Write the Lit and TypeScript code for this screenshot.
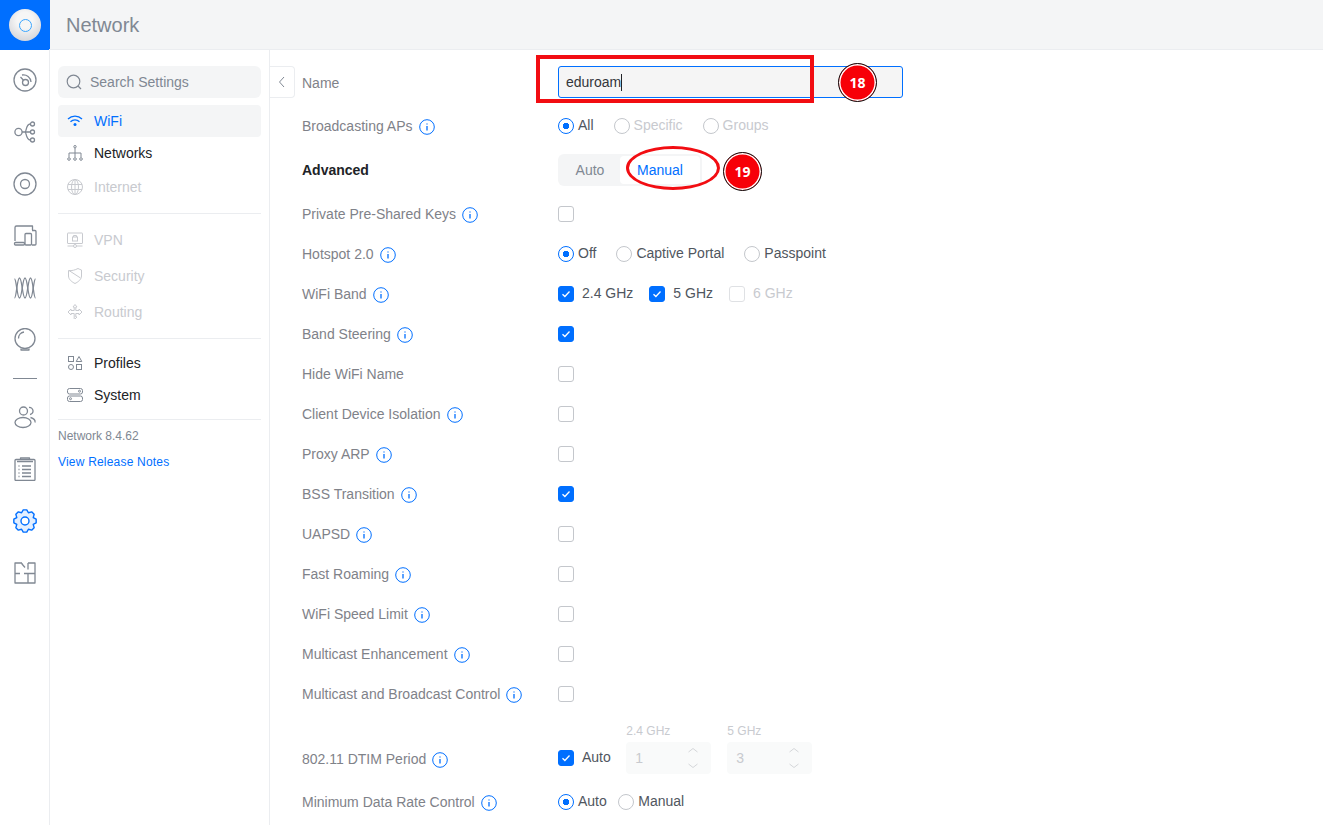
import { LitElement, html, css, svg } from 'lit';
import { customElement } from 'lit/decorators.js';

const gear = () => {
  // eight toothed gear, computed so the teeth stay even
  let d = '';
  const teeth = 8;
  for (let i = 0; i < teeth; i++) {
    const a = (i * Math.PI * 2) / teeth - Math.PI / 2;
    const step = (Math.PI * 2) / teeth;
    const pts: [number, number][] = [
      [8.9, a - step * 0.5],
      [11.3, a - step * 0.2],
      [11.3, a + step * 0.2],
    ];
    for (const [r, t] of pts) {
      d += `${d ? 'L' : 'M'}${(12 + r * Math.cos(t)).toFixed(2)} ${(12 + r * Math.sin(t)).toFixed(2)}`;
    }
  }
  return d + 'Z';
};

const railIcons = [
  svg`<circle cx="12" cy="12" r="11"/><circle cx="12.500" cy="14.500" r="3"/><path d="M7.500 9l3 3.200M9 7a7.500 7.500 0 0 1 9 7"/>`,
  svg`<circle cx="5.500" cy="12" r="3.600"/><path d="M9 12h8M12 12c1.500 0 .8-8 5.200-8M12 12c1.500 0 .8 8 5.200 8"/><circle cx="19.500" cy="4" r="2"/><circle cx="19.500" cy="12" r="2"/><circle cx="19.500" cy="20" r="2"/>`,
  svg`<circle cx="12" cy="12" r="11"/><circle cx="12" cy="12" r="4.500"/>`,
  svg`<path d="M2 17V3.500A1.500 1.500 0 0 1 3.500 2H19.500v4"/><rect x="1.500" y="18.500" width="10" height="2.500" rx="1"/><rect x="12" y="9.500" width="6.500" height="11.500" rx="1"/><path d="M19 6.500h3a1 1 0 0 1 1 1V20a1 1 0 0 1-1 1h-3"/>`,
  svg`<path d="M1.500 3C3.500 3 4 22 6.500 22S9.500 2 12 2s3 20 5.500 20 3-19 5-19"/><path d="M1.500 22C3.500 22 4 2 6.500 2S9.500 22 12 22s3-20 5.500-20 3 20 5 20"/>`,
  svg`<circle cx="12" cy="10.500" r="10"/><path d="M5.500 10.500A6.500 6.500 0 0 1 11 4M8 20.500v1.500h8v-1.500"/>`,
  svg`<circle cx="10.500" cy="6" r="4"/><ellipse cx="10" cy="17.500" rx="8" ry="5"/><path d="M16 2.500a3.500 3.500 0 0 1 1 7M17.500 12.500c3 .8 5 2.500 4.500 5"/>`,
  svg`<rect x="2" y="2.500" width="20" height="21" rx="1"/><path d="M7.500 2.500V1h9v1.500M4 4.500h16"/><path d="M9 9h9M9 12.500h9M9 16h9M9 19.500h9M5.500 9h1M5.500 12.500h1M5.500 16h1M5.500 19.500h1"/>`,
  svg`<path class="gear" d="${gear()}"/><circle class="gear-hole" cx="12" cy="12" r="4"/>`,
  svg`<path d="M9 2H2v20h20V2h-7M9 2v1l3 3.500M15 2v6.500M2 12.500h5M11 12.500h11M15 12.500V22"/>`,
];
const railSep = 6;

const navIcons: Record<string, unknown> = {
  wifi: svg`<path d="M2 7a10 10 0 0 1 14 0M4.500 9.700a6.500 6.500 0 0 1 9 0"/><circle class="solid" cx="9" cy="12.500" r="1.500"/>`,
  networks: svg`<rect x="7.800" y="1.500" width="2.400" height="2.400" rx="1.200"/><path d="M9 4v9M3 13V9h12v4"/><circle cx="3" cy="15" r="1.300"/><circle cx="9" cy="15" r="1.300"/><circle cx="15" cy="15" r="1.300"/>`,
  internet: svg`<circle cx="9" cy="9" r="7.500"/><ellipse cx="9" cy="9" rx="3.500" ry="7.500"/><path d="M9 1.500v15M2 6.500h14M2 11.500h14"/>`,
  vpn: svg`<rect x="1.500" y="2" width="15" height="10.500" rx=".5"/><rect x="6.500" y="6" width="5" height="4"/><path d="M7.500 6V4.500h3V6M1.500 15h6M10.500 15h6"/><circle cx="9" cy="15" r="1.500"/>`,
  security: svg`<path d="M2.500 3.500C6 4 9 3 12 1.500c1 .6 2.500 1.200 3.500 1.500V9c0 3.500-3.500 6-6.500 7.500C6 15 2.500 12.500 2.500 9zM3 3.500L14.500 11"/>`,
  routing: svg`<path d="M9 1.500l-2 2.500h1.200v3.500H5V6L2 9l3 3v-1.500h3.200V16M9.800 4H11L9 1.500M9.800 4v3.500H13V6l3 3-3 3v-1.500H9.800V14H11l-2 2"/>`,
  profiles: svg`<rect x="2.500" y="2.500" width="5" height="5"/><path d="M13 2.500l2.800 5h-5.600z"/><circle cx="5" cy="13" r="2.500"/><rect x="10.500" y="10.500" width="5" height="5"/>`,
  system: svg`<rect x="1.500" y="2.500" width="15" height="5.500" rx="2"/><rect x="1.500" y="10" width="15" height="5.500" rx="2"/><circle cx="13.500" cy="5.200" r="1"/><circle cx="4.500" cy="12.700" r="1"/>`,
};

type Row = { label: string; info?: boolean; checked?: boolean };
const checkRows: Row[] = [
  { label: 'Band Steering', info: true, checked: true },
  { label: 'Hide WiFi Name' },
  { label: 'Client Device Isolation', info: true },
  { label: 'Proxy ARP', info: true },
  { label: 'BSS Transition', info: true, checked: true },
  { label: 'UAPSD', info: true },
  { label: 'Fast Roaming', info: true },
  { label: 'WiFi Speed Limit', info: true },
  { label: 'Multicast Enhancement', info: true },
  { label: 'Multicast and Broadcast Control', info: true },
];

@customElement('app-root')
export class AppRoot extends LitElement {
  static styles = css`
    :host {
      display: block;
      height: 825px;
      overflow: hidden;
      background: #fff;
      font-family: 'Liberation Sans', Arial, sans-serif;
      font-size: 14px;
      color: #50565e;
    }
    svg {
      display: block;
      fill: none;
    }
    .header {
      display: flex;
      align-items: center;
      height: 50px;
      background: #f4f5f6;
    }
    .logo {
      display: flex;
      align-items: center;
      justify-content: center;
      width: 50px;
      height: 50px;
      background: #006fff;
    }
    .logo-disc {
      display: flex;
      align-items: center;
      justify-content: center;
      width: 32px;
      height: 32px;
      border-radius: 50%;
      background: radial-gradient(circle at 50% 35%, #f6f6f6 30%, #c9cacf 100%);
    }
    .logo-ring {
      width: 11px;
      height: 11px;
      border: 1.500px solid #3aa5ff;
      border-radius: 50%;
    }
    .title {
      margin-left: 16px;
      font-size: 20px;
      color: #808893;
    }
    .body {
      display: flex;
      height: 776px;
      margin-top: -1px;
    }
    .rail {
      width: 49px;
      flex: none;
      padding-top: 5px;
      border-right: 1px solid #ebedf0;
    }
    .rail-item {
      display: flex;
      align-items: center;
      justify-content: center;
      height: 52px;
      width: 50px;
    }
    .rail-item svg {
      stroke: #808893;
      stroke-width: 1.300;
      stroke-linejoin: round;
    }
    .rail-item .gear {
      fill: #e3efff;
      stroke: #006fff;
      stroke-width: 1.400;
    }
    .rail-item .gear-hole {
      fill: #fff;
      stroke: #006fff;
      stroke-width: 1.400;
    }
    .rail-sep {
      display: flex;
      align-items: center;
      height: 25px;
      padding-left: 13px;
    }
    .rail-sep i {
      display: block;
      width: 24px;
      height: 1px;
      background: #808893;
    }
    .side {
      width: 203px;
      flex: none;
      padding: 16px 8px 0;
      border-right: 1px solid #ebedf0;
      border-top: 1px solid #ebedf0;
    }
    .search {
      display: flex;
      align-items: center;
      gap: 8px;
      height: 32px;
      padding-left: 8px;
      border-radius: 6px;
      background: #f4f5f6;
      color: #808893;
    }
    .search svg {
      stroke: #808893;
      stroke-width: 1.200;
    }
    .nav {
      display: flex;
      align-items: center;
      gap: 10px;
      height: 32px;
      padding-left: 8px;
      border-radius: 4px;
      color: #212327;
    }
    .nav svg {
      stroke: #808893;
      stroke-width: 1;
    }
    .nav.active {
      margin-top: 7px;
      background: #f4f5f6;
      color: #006fff;
    }
    .nav.active svg {
      stroke: #006fff;
      stroke-width: 1.300;
    }
    .nav .solid {
      fill: #006fff;
      stroke: none;
    }
    .nav.off {
      height: 36px;
      color: #c8cacf;
    }
    .nav.off svg {
      stroke: #c8cacf;
    }
    .divider {
      height: 1px;
      margin: 8px 0;
      background: #ebedf0;
    }
    .version {
      font-size: 12px;
      line-height: 16px;
      color: #808893;
    }
    .notes {
      margin-top: 10px;
      font-size: 12px;
      line-height: 16px;
      letter-spacing: 0.2px;
      color: #006fff;
    }
    .main {
      position: relative;
      flex: 1;
      padding: 16px 0 0 32px;
      border-top: 1px solid #ebedf0;
    }
    .collapse {
      position: absolute;
      left: 0;
      top: 16px;
      display: flex;
      align-items: center;
      justify-content: center;
      box-sizing: border-box;
      width: 25px;
      height: 32px;
      border: 1px solid #ebedf0;
      border-left: none;
      border-radius: 0 4px 4px 0;
      background: #fff;
    }
    .collapse svg {
      stroke: #808893;
      stroke-width: 1;
    }
    .row {
      display: flex;
      align-items: center;
      height: 40px;
    }
    .row.first {
      height: 34px;
      margin-bottom: 6px;
    }
    .row.adv {
      margin: 4px 0;
    }
    .row.tall {
      align-items: flex-end;
      height: 65px;
    }
    .row.last {
      margin-top: 3px;
    }
    .label {
      display: flex;
      align-items: center;
      gap: 6px;
      width: 256px;
      flex: none;
      color: #7f8289;
    }
    .row.tall .label {
      height: 40px;
    }
    .label.bold {
      font-weight: 700;
      color: #212327;
    }
    .info {
      margin-top: 2px;
      stroke: #006fff;
      stroke-width: 1;
    }
    .group {
      display: flex;
      align-items: center;
    }
    .name-input {
      display: flex;
      align-items: center;
      box-sizing: border-box;
      width: 345px;
      height: 32px;
      margin-top: -2px;
      padding-left: 7px;
      border: 1px solid #006fff;
      border-radius: 3px;
      background: #f5f5f5;
      color: #33363b;
    }
    .caret {
      width: 1px;
      height: 17px;
      background: #212327;
    }
    .lift {
      margin-bottom: 2px;
    }
    .radio {
      display: flex;
      align-items: center;
      margin-right: 20px;
    }
    .radio.tight {
      margin-right: 11.500px;
    }
    .radio i {
      display: block;
      box-sizing: border-box;
      width: 16px;
      height: 16px;
      margin-right: 4px;
      border: 1px solid #c4c7cc;
      border-radius: 50%;
    }
    .radio.on i {
      border-color: #006fff;
      background: radial-gradient(circle, #006fff 0 3px, #fff 3.500px);
    }
    .radio.dim {
      color: #c8cacf;
    }
    .box {
      display: flex;
      align-items: center;
      justify-content: center;
      box-sizing: border-box;
      width: 16px;
      height: 16px;
      border: 1px solid #c4c7cc;
      border-radius: 3px;
      background: #fff;
    }
    .box.on {
      border-color: #006fff;
      background: #006fff;
    }
    .box.dim {
      border-color: #dfe1e4;
    }
    .box svg {
      stroke: #fff;
      stroke-width: 1.300;
    }
    .check {
      display: flex;
      align-items: center;
      gap: 8px;
      margin-right: 16px;
    }
    .check.dim {
      color: #c8cacf;
    }
    .seg {
      display: flex;
      box-sizing: border-box;
      width: 144px;
      height: 32px;
      padding: 2px;
      border-radius: 6px;
      background: #f4f5f6;
    }
    .seg span {
      display: flex;
      align-items: center;
      justify-content: center;
      height: 28px;
      color: #808893;
    }
    .seg .auto {
      width: 60px;
    }
    .seg .manual {
      width: 80px;
      border-radius: 4px;
      background: #fff;
      color: #006fff;
    }
    .tall-group {
      align-items: flex-end;
      padding-bottom: 5px;
    }
    .tall-group .check {
      height: 32px;
      margin-right: 15.500px;
    }
    .field {
      margin-right: 16px;
      width: 85px;
    }
    .field small {
      display: block;
      margin-bottom: 4px;
      font-size: 12px;
      line-height: 14px;
      color: #c8cacf;
    }
    .num {
      display: flex;
      align-items: center;
      justify-content: space-between;
      height: 32px;
      padding: 0 12px 0 9px;
      border-radius: 4px;
      background: #f9fafa;
      color: #c8cacf;
    }
    .num svg {
      stroke: #d5d7da;
      stroke-width: 1;
    }
    .marks {
      position: absolute;
      left: -270px;
      top: -50px;
      width: 1323px;
      height: 825px;
      pointer-events: none;
    }
    .mark-rect {
      position: absolute;
      left: 536px;
      top: 55px;
      box-sizing: border-box;
      width: 278px;
      height: 48px;
      border: 4px solid #f20d12;
    }
    .mark-oval {
      position: absolute;
      left: 626px;
      top: 146px;
      box-sizing: border-box;
      width: 94px;
      height: 44px;
      border: 3px solid #f20d12;
      border-radius: 50%;
    }
    .pin {
      position: absolute;
      display: flex;
      align-items: center;
      justify-content: center;
      box-sizing: border-box;
      width: 39px;
      height: 39px;
      border: 1px solid #111;
      border-radius: 50%;
      background: #f70008;
      box-shadow: inset 0 0 0 1.500px #fff;
      color: #fff;
      font-family: 'Open Sans', sans-serif;
      font-weight: 700;
      font-size: 14px;
    }
  `;

  private radio(text: string, on = false, dim = false, tight = false) {
    const cls = `radio${on ? ' on' : ''}${dim ? ' dim' : ''}${tight ? ' tight' : ''}`;
    return html`<div class=${cls}><i></i><span class="lift">${text}</span></div>`;
  }

  private box(on = false, dim = false) {
    return html`<div class="box ${on ? 'on' : ''} ${dim ? 'dim' : ''}">
      ${on
        ? html`<svg width="10" height="10" viewBox="0 0 10 10"><path d="M1.500 5.200l2.400 2.300 4.600-5"/></svg>`
        : ''}
    </div>`;
  }

  private label(text: string, info = true, bold = false) {
    return html`<div class="label ${bold ? 'bold' : ''}">
      ${text}
      ${info
        ? html`<svg class="info" width="16" height="16" viewBox="0 0 16 16">
            <circle cx="8" cy="8" r="7.300"/>
            <path d="M8 7v4.500M8 4.400v1.200" stroke-width="1.300"/>
          </svg>`
        : ''}
    </div>`;
  }

  private nav(id: string, text: string, cls = '') {
    return html`<div class="nav ${cls}">
      <svg width="18" height="18" viewBox="0 0 18 18">${navIcons[id]}</svg>${text}
    </div>`;
  }

  private num(value: string) {
    return html`<div class="num">
      ${value}
      <svg width="12" height="24" viewBox="0 0 12 24"><path d="M1.500 6l4.500-3.500 4.500 3.500M1.500 18l4.500 3.500 4.500-3.500"/></svg>
    </div>`;
  }

  render() {
    return html`
      <div class="header">
        <div class="logo"><div class="logo-disc"><div class="logo-ring"></div></div></div>
        <div class="title">Network</div>
      </div>
      <div class="body">
        <div class="rail">
          ${railIcons.map(
            (icon, i) => html`
              ${i === railSep ? html`<div class="rail-sep"><i></i></div>` : ''}
              <div class="rail-item"><svg width="24" height="24" viewBox="0 0 24 24">${icon}</svg></div>
            `
          )}
        </div>
        <div class="side">
          <div class="search">
            <svg width="16" height="16" viewBox="0 0 16 16"><circle cx="7.500" cy="7.500" r="6.300"/><path d="M12 12l3 3"/></svg>
            Search Settings
          </div>
          ${this.nav('wifi', 'WiFi', 'active')}
          ${this.nav('networks', 'Networks')}
          ${this.nav('internet', 'Internet', 'off')}
          <div class="divider"></div>
          ${this.nav('vpn', 'VPN', 'off')}
          ${this.nav('security', 'Security', 'off')}
          ${this.nav('routing', 'Routing', 'off')}
          <div class="divider"></div>
          ${this.nav('profiles', 'Profiles')}
          ${this.nav('system', 'System')}
          <div class="divider"></div>
          <div class="version">Network 8.4.62</div>
          <div class="notes">View Release Notes</div>
        </div>
        <div class="main">
          <div class="collapse">
            <svg width="10" height="12" viewBox="0 0 10 12"><path d="M7 1L2.500 6 7 11"/></svg>
          </div>
          <div class="row first">
            ${this.label('Name', false)}
            <div class="name-input">eduroam<span class="caret"></span></div>
          </div>
          <div class="row">
            ${this.label('Broadcasting APs')}
            <div class="group">
              ${this.radio('All', true)}${this.radio('Specific', false, true)}${this.radio('Groups', false, true)}
            </div>
          </div>
          <div class="row adv">
            ${this.label('Advanced', false, true)}
            <div class="seg"><span class="auto">Auto</span><span class="manual">Manual</span></div>
          </div>
          <div class="row">
            ${this.label('Private Pre-Shared Keys')}
            ${this.box()}
          </div>
          <div class="row">
            ${this.label('Hotspot 2.0')}
            <div class="group">
              ${this.radio('Off', true)}${this.radio('Captive Portal')}${this.radio('Passpoint')}
            </div>
          </div>
          <div class="row">
            ${this.label('WiFi Band')}
            <div class="group">
              <div class="check">${this.box(true)}<span class="lift">2.4 GHz</span></div>
              <div class="check">${this.box(true)}<span class="lift">5 GHz</span></div>
              <div class="check dim">${this.box(false, true)}<span class="lift">6 GHz</span></div>
            </div>
          </div>
          ${checkRows.map(
            (r) => html`<div class="row">${this.label(r.label, !!r.info)}${this.box(!!r.checked)}</div>`
          )}
          <div class="row tall">
            ${this.label('802.11 DTIM Period')}
            <div class="group tall-group">
              <div class="check">${this.box(true)}<span class="lift">Auto</span></div>
              <div class="field"><small>2.4 GHz</small>${this.num('1')}</div>
              <div class="field"><small>5 GHz</small>${this.num('3')}</div>
            </div>
          </div>
          <div class="row last">
            ${this.label('Minimum Data Rate Control')}
            <div class="group">${this.radio('Auto', true, false, true)}${this.radio('Manual')}</div>
          </div>
          <div class="marks">
            <div class="mark-rect"></div>
            <div class="mark-oval"></div>
            <div class="pin" style="left:838px;top:63px">18</div>
            <div class="pin" style="left:723px;top:152px">19</div>
          </div>
        </div>
      </div>
    `;
  }
}
